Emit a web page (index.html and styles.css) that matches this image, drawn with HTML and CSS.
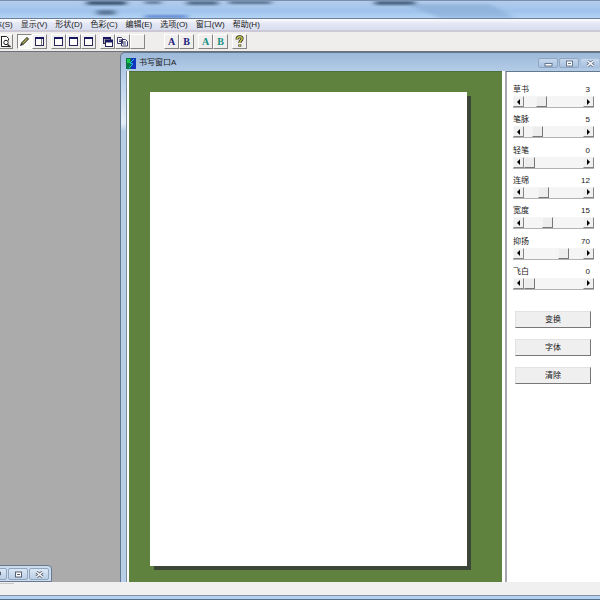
FILE: index.html
```html
<!DOCTYPE html>
<html lang="zh-CN">
<head>
<meta charset="utf-8">
<title>书写窗口A</title>
<link rel="stylesheet" href="styles.css">
</head>
<body>
<div class="app">
  <header class="titlebar">
    <svg class="reflections" width="600" height="18" viewBox="0 0 600 18" aria-hidden="true">
      <defs><filter id="soft" x="-20%" y="-100%" width="140%" height="300%"><feGaussianBlur stdDeviation="3 1"/></filter></defs>
      <g filter="url(#soft)" fill="#3c5674">
        <rect x="87" y="0" width="39" height="4"/><rect x="97" y="9" width="18" height="5" opacity=".7"/>
        <rect x="145" y="0" width="16" height="3" opacity=".7"/><rect x="187" y="0" width="31" height="4" opacity=".8"/>
        <rect x="229" y="0" width="42" height="3" opacity=".8"/><rect x="375" y="0" width="40" height="4" opacity=".9"/>
        <rect x="145" y="14" width="42" height="3" fill="#3c6cc4" opacity=".7"/>
        <path d="M405 3h85l25 14h-75z" fill="#6f96c4" opacity=".35"/>
      </g>
    </svg>
  </header>

  <nav class="menubar" aria-label="菜单">
    <button class="menu menu-cut">体(S)</button>
    <button class="menu">显示(V)</button>
    <button class="menu">形状(D)</button>
    <button class="menu">色彩(C)</button>
    <button class="menu">编辑(E)</button>
    <button class="menu">选项(O)</button>
    <button class="menu">窗口(W)</button>
    <button class="menu">帮助(H)</button>
  </nav>

  <div class="toolbar" role="toolbar">
    <div class="group group-first">
      <button class="tool" aria-label="预览"><svg width="13" height="13" viewBox="0 0 13 13" fill="none" stroke="#222"><path d="M2.500 1v10.500h8M2.500 1.500h5l2 2v2" fill="#fff"/><circle cx="7" cy="7.500" r="2.200" fill="#fff"/><path d="M8.500 9.500l3 2.500" stroke-width="1.500"/></svg></button>
    </div>
    <div class="group">
      <button class="tool pressed" aria-label="笔"><svg width="13" height="13" viewBox="0 0 13 13"><path d="M4 9l6-6" stroke="#222" stroke-width="3"/><path d="M4.500 8.500l5-5" stroke="#b4b450" stroke-width="1.500"/><path d="M2 11l1-3 2 2z" fill="#222"/></svg></button>
      <button class="tool" aria-label="面板"><svg width="13" height="13" viewBox="0 0 13 13"><rect x="2.500" y="2.500" width="8" height="8" fill="#fff" stroke="#282858"/><path d="M2 3h9" stroke="#181860" stroke-width="2"/><path d="M8.500 4v6" stroke="#777"/></svg></button>
    </div>
    <div class="group">
      <button class="tool" aria-label="窗口一"><svg width="13" height="13" viewBox="0 0 13 13"><rect x="2.500" y="2.500" width="8" height="8" fill="#fff" stroke="#282858"/><path d="M2 3h9" stroke="#181860" stroke-width="2"/></svg></button>
      <button class="tool" aria-label="窗口二"><svg width="13" height="13" viewBox="0 0 13 13"><rect x="2.500" y="2.500" width="8" height="8" fill="#fff" stroke="#282858"/><path d="M2 3h9" stroke="#181860" stroke-width="2"/></svg></button>
      <button class="tool" aria-label="窗口三"><svg width="13" height="13" viewBox="0 0 13 13"><rect x="2.500" y="2.500" width="8" height="8" fill="#fff" stroke="#282858"/><path d="M2 3h9" stroke="#181860" stroke-width="2"/></svg></button>
    </div>
    <div class="group">
      <button class="tool" aria-label="层叠"><svg width="13" height="13" viewBox="0 0 13 13"><rect x="2.500" y="2.500" width="7" height="6" fill="#aaa" stroke="#282858"/><path d="M2 3h8" stroke="#181860" stroke-width="2"/><rect x="4.500" y="5.500" width="7" height="6" fill="#fff" stroke="#282858"/><path d="M4 6h8" stroke="#181860" stroke-width="3"/></svg></button>
      <button class="tool" aria-label="复制"><svg width="13" height="13" viewBox="0 0 13 13" fill="#fff" stroke="#35356a"><path d="M1.500 2.500h4l1 1v5h-5zM5.500 4.500h4l2 2v4.500h-6zM3 5h2M3 6.500h2M7 7h3M7 9h3"/></svg></button>
      <button class="tool" aria-label="空白"></button>
    </div>
    <div class="group group-apart">
      <button class="tool letter navy">A</button>
      <button class="tool letter navy">B</button>
    </div>
    <div class="group">
      <button class="tool letter teal">A</button>
      <button class="tool letter teal">B</button>
    </div>
    <div class="group">
      <button class="tool" aria-label="帮助"><svg width="13" height="13" viewBox="0 0 13 13" fill="none"><path d="M4 4.500c0-4 6-3.500 5-.5-.5 1.500-2.200 1.500-2.200 4M6.800 9.500v2" stroke="#222" stroke-width="3"/><path d="M4 4.500c0-4 6-3.500 5-.5-.5 1.500-2.200 1.500-2.200 4M6.800 9.800v1.500" stroke="#d0d050" stroke-width="1.500"/></svg></button>
    </div>
  </div>

  <main class="desktop">
    <div class="side">
      <div class="minimized">
        <button class="cap" aria-label="还原"><svg width="9" height="7" viewBox="0 0 9 7"><path d="M1.500 2.500h4v3h-4zM3.500 2v-1h4v3h-2" fill="#fff" stroke="#566070"/></svg></button>
        <button class="cap" aria-label="最大化"><svg width="9" height="7" viewBox="0 0 9 7"><rect x="1.500" y="1" width="6" height="5" fill="#fff" stroke="#566070"/><path d="M3 3.500h3" stroke="#566070"/></svg></button>
        <button class="cap" aria-label="关闭"><svg width="9" height="7" viewBox="0 0 9 7"><path d="M1.500 1l6 5M7.500 1l-6 5" stroke="#566070" stroke-width="3"/><path d="M1.500 1l6 5M7.500 1l-6 5" stroke="#fff" stroke-width="1.500"/></svg></button>
      </div>
    </div>

    <section class="window">
      <div class="caption">
        <svg width="10" height="11" viewBox="0 0 10 11" aria-hidden="true"><path fill="#087a48" d="M0 0h10v11H0z"/><path fill="#1236bd" d="M5 0h5v11H5z"/><path fill="#18c848" d="M1 1h3v4H1z"/><path d="M8 1L4 5l3 1-4 4" fill="none" stroke="#20c8d8"/></svg>
        <h1>书写窗口A</h1>
        <div class="caps">
          <button class="cap" aria-label="最小化"><svg width="9" height="7" viewBox="0 0 9 7"><rect x="1" y="3.500" width="7" height="2.500" fill="#fff" stroke="#66778e"/></svg></button>
          <button class="cap" aria-label="最大化"><svg width="9" height="7" viewBox="0 0 9 7"><rect x="1.500" y="1" width="6" height="5" fill="#fff" stroke="#66778e"/><path d="M3 3.500h3" stroke="#66778e"/></svg></button>
          <button class="cap" aria-label="关闭"><svg width="9" height="7" viewBox="0 0 9 7"><path d="M1.500 1l6 5M7.500 1l-6 5" stroke="#66778e" stroke-width="3"/><path d="M1.500 1l6 5M7.500 1l-6 5" stroke="#fff" stroke-width="1.500"/></svg></button>
        </div>
      </div>
      <div class="content">
        <div class="board"><div class="paper"></div></div>
        <aside class="panel">
          <div class="sliders">
            <div class="field"><label for="s1">草书</label><output for="s1">3</output><div class="scroll"><button class="arrow left" aria-label="减少"></button><input id="s1" type="range" max="12" value="3"><button class="arrow right" aria-label="增加"></button></div></div>
            <div class="field"><label for="s2">笔脉</label><output for="s2">5</output><div class="scroll"><button class="arrow left" aria-label="减少"></button><input id="s2" type="range" max="30" value="5"><button class="arrow right" aria-label="增加"></button></div></div>
            <div class="field"><label for="s3">轻笔</label><output for="s3">0</output><div class="scroll"><button class="arrow left" aria-label="减少"></button><input id="s3" type="range" max="30" value="0"><button class="arrow right" aria-label="增加"></button></div></div>
            <div class="field"><label for="s4">连绵</label><output for="s4">12</output><div class="scroll"><button class="arrow left" aria-label="减少"></button><input id="s4" type="range" max="40" value="12"><button class="arrow right" aria-label="增加"></button></div></div>
            <div class="field"><label for="s5">宽度</label><output for="s5">15</output><div class="scroll"><button class="arrow left" aria-label="减少"></button><input id="s5" type="range" max="40" value="15"><button class="arrow right" aria-label="增加"></button></div></div>
            <div class="field"><label for="s6">抑扬</label><output for="s6">70</output><div class="scroll"><button class="arrow left" aria-label="减少"></button><input id="s6" type="range" max="100" value="70"><button class="arrow right" aria-label="增加"></button></div></div>
            <div class="field"><label for="s7">飞白</label><output for="s7">0</output><div class="scroll"><button class="arrow left" aria-label="减少"></button><input id="s7" type="range" max="30" value="0"><button class="arrow right" aria-label="增加"></button></div></div>
          </div>
          <div class="actions">
            <button>变换</button>
            <button>字体</button>
            <button>清除</button>
          </div>
        </aside>
      </div>
    </section>
  </main>

  <footer class="status"><span class="status-cell"></span></footer>
  <div class="frame-bottom"></div>
</div>
</body>
</html>
```

FILE: styles.css
```css
* { box-sizing: border-box; }

body {
  margin: 0;
  font: 8px/12px "Liberation Sans", "Noto Sans CJK SC", sans-serif;
  color: #181818;
}

button {
  margin: 0;
  padding: 0;
  border: 0;
  background: none;
  font: inherit;
  color: inherit;
}

svg { display: block; }

.app {
  display: flex;
  flex-direction: column;
  height: 100vh;
  overflow: hidden;
  background: #efefef;
}

.titlebar {
  flex: none;
  height: 19px;
  overflow: hidden;
  border-top: 1px solid #7890ae;
  border-bottom: 1px solid #6b7f9c;
  background: linear-gradient(#b4cdec, #9fc3ec 60%, #b4d4f4);
}

.menubar {
  display: flex;
  flex: none;
  gap: 8px;
  height: 13px;
  border-bottom: 2px solid #cdc8d6;
  background: linear-gradient(#fdfdff, #e4e7f4 40%, #d9deef);
}

.menu { white-space: nowrap; }
.menu-cut { margin-left: -6px; }

.toolbar {
  display: flex;
  flex: none;
  align-items: center;
  gap: 4px;
  height: 20px;
  border-bottom: 1px solid #6c7077;
  background: #efeeec;
}

.group { display: flex; }
.group-first { margin-left: -2px; }
.group-apart { margin-left: 15px; }

.tool {
  display: grid;
  place-items: center;
  width: 15px;
  height: 15px;
  border: 1px solid #fff;
  border-right-color: #858585;
  border-bottom-color: #858585;
  background: #f0efed;
}

.pressed {
  border-color: #858585 #fff #fff #858585;
  background: #fafaf7;
}

.letter { font: bold 10px/12px "Liberation Serif", serif; }
.navy { color: #20207c; }
.teal { color: #178f83; }

.desktop {
  display: flex;
  flex: 1;
  min-height: 0;
  background: #ababab;
}

.side {
  display: flex;
  flex: 0 0 20%;
  align-items: flex-end;
}

.minimized {
  display: flex;
  gap: 1px;
  margin-left: -14px;
  padding: 2px 2px 1px 0;
  border: 1px solid #68798f;
  border-radius: 0 4px 0 0;
  background: #cbdcee;
}

.cap {
  display: grid;
  place-items: center;
  width: 20px;
  height: 12px;
  border: 1px solid #91a5be;
  border-radius: 2px;
  background: linear-gradient(#dce8f5, #bacee5);
}

.window {
  display: flex;
  flex: 1;
  flex-direction: column;
  min-width: 0;
  padding-left: 5px;
  border: solid #63788f;
  border-width: 1px 0 0 1px;
  border-radius: 5px 0 0;
  background: linear-gradient(#9db9d9, #b5cee9 20px, #e6eff8 70px, #b9cfe7 78px);
}

.caption {
  display: flex;
  flex: none;
  align-items: center;
  gap: 3px;
  height: 18px;
  padding-top: 2px;
}

.caption h1 {
  flex: 1;
  margin: 0;
  font-size: 8px;
  font-weight: 400;
}

.caps { display: flex; gap: 1px; }
.caps .cap { height: 10px; background: linear-gradient(#c5d8ed, #a8c1df); }
.caps .cap:last-child { border-color: #a9c0dc; }

.content {
  display: flex;
  flex: 1;
  min-height: 0;
  padding-left: 2px;
  border-left: 1px solid #7b8ca0;
  background: #fff;
}

.board {
  display: flex;
  flex: 1;
  padding: 20px 35px 16px 21px;
  border-top: 1px solid #4f7038;
  background: #5f823f;
}

.paper {
  flex: 1;
  background: #fff;
  box-shadow: 4px 4px 0 #3b4638;
}

.panel {
  flex: 0 0 95px;
  margin-left: 3px;
  padding: 12px 6px 0;
  border-top: 1px solid #65798f;
  border-left: 2px solid #a5a6b1;
  background: #fff;
}

.sliders {
  display: flex;
  flex-direction: column;
  justify-content: space-between;
  height: 206px;
}

.field {
  display: grid;
  grid-template-columns: 1fr auto;
}

.field output { padding-right: 4px; }

.scroll {
  display: flex;
  grid-column: 1 / -1;
  height: 12px;
  border-bottom: 1px solid #b2b2b2;
  background: #f5f5f5;
}

.arrow {
  display: grid;
  flex: none;
  place-items: center;
  width: 11px;
  border: 1px solid #f4f4f4;
  border-right-color: #858585;
  border-bottom-color: #858585;
  background: #f0f0f0;
}

.arrow::before {
  content: "";
  border: solid transparent;
  border-width: 3px;
}

.left::before { border-right-color: #000; border-left-width: 0; }
.right::before { border-left-color: #000; border-right-width: 0; }

.scroll input {
  flex: 1;
  min-width: 0;
  height: 11px;
  margin: 0;
  appearance: none;
  background: #f5f5f5;
}

.scroll input::-webkit-slider-thumb {
  width: 11px;
  height: 11px;
  appearance: none;
  border: 1px solid #f4f4f4;
  border-right-color: #777;
  border-bottom-color: #777;
  background: #ededed;
}

.actions {
  display: flex;
  flex-direction: column;
  gap: 11px;
  padding: 21px 3px 0 2px;
}

.actions button {
  height: 17px;
  border: 1px solid #e2e2e2;
  border-right-color: #777;
  border-bottom-color: #777;
  background: #efefef;
}

.status {
  display: flex;
  flex: none;
  height: 13px;
  background: #f0f0f0;
}

.status-cell {
  width: 14px;
  height: 2px;
  border-bottom: 1px solid #c8c8c8;
}

.frame-bottom {
  flex: none;
  height: 5px;
  border-top: 1px solid #8193ab;
  border-bottom: 1px solid #536f90;
  background: #b5d0ec;
}
```
